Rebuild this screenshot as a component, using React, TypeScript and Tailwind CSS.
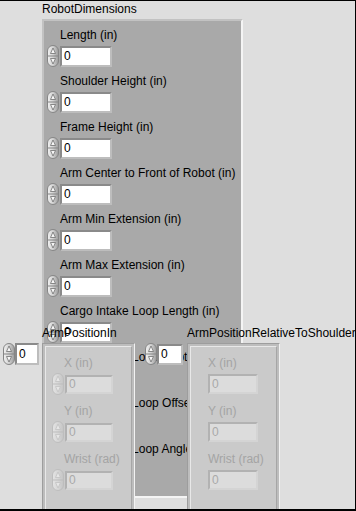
import React from 'react'

const font = { fontFamily: '"Liberation Sans", Arial, sans-serif' }

function Spinner({ disabled = false }: { disabled?: boolean }) {
  const edge = disabled ? '#bdbdbd' : '#858585'
  const arrow = disabled ? '#c2c2c2' : '#6e6e6e'
  const id = disabled ? 'spinD' : 'spinE'
  return (
    <svg width="12" height="22" viewBox="0 0 12 22" className="shrink-0">
      <defs>
        <linearGradient id={id} x1="0" y1="0" x2="1" y2="0">
          <stop offset="0" stopColor={disabled ? '#e4e4e4' : '#f2f2f2'} />
          <stop offset="0.5" stopColor={disabled ? '#d6d6d6' : '#d2d2d2'} />
          <stop offset="1" stopColor={disabled ? '#c4c4c4' : '#9a9a9a'} />
        </linearGradient>
      </defs>
      <rect x="0.5" y="0.5" width="11" height="21" rx="5.5" fill={`url(#${id})`} stroke={edge} />
      <line x1="1" y1="11" x2="11" y2="11" stroke={edge} strokeWidth="1" />
      <polygon points="6,3 3.5,8.5 8.5,8.5" fill={disabled ? '#e6e6e6' : '#f6f6f6'} stroke={arrow} strokeWidth="0.8" />
      <polygon points="6,19 3.5,13.5 8.5,13.5" fill={disabled ? '#e6e6e6' : '#f6f6f6'} stroke={arrow} strokeWidth="0.8" />
    </svg>
  )
}

function NumBox({ w, h = 21, disabled = false }: { w: number; h?: number; disabled?: boolean }) {
  return (
    <div
      className={
        disabled
          ? 'flex items-center border-2 border-t-[#b2b2b2] border-l-[#b2b2b2] border-b-[#d4d4d4] border-r-[#d4d4d4] bg-[#dcdcdc] pl-[2px] text-[12px] text-[#a9a9a9]'
          : 'flex items-center border-2 border-t-[#8a8a8a] border-l-[#8a8a8a] border-b-[#bdbdbd] border-r-[#bdbdbd] bg-white pl-[2px] text-[12px] text-black'
      }
      style={{ width: w, height: h }}
    >
      0
    </div>
  )
}

// the last three rows are mostly hidden behind the two position clusters
const robotFields = [
  'Length (in)',
  'Shoulder Height (in)',
  'Frame Height (in)',
  'Arm Center to Front of Robot (in)',
  'Arm Min Extension (in)',
  'Arm Max Extension (in)',
  'Cargo Intake Loop Length (in)',
  'Cargo Intake Loop Depth (in)',
  'Cargo Intake Loop Offset (in)',
  'Cargo Intake Loop Angle (rad)',
]

const posFields = ['X (in)', 'Y (in)', 'Wrist (rad)']

function PositionCluster({ control }: { control: boolean }) {
  return (
    <div className="h-[170px] w-[93px] border-t border-l border-[#9d9d9d] border-r-[#f2f2f2] border-b-[#f2f2f2] border-r border-b bg-[#bdbdbd] p-[2px]">
      <div
        className={
          'flex h-full flex-col gap-[8px] border border-t-[#e8e8e8] border-l-[#e8e8e8] border-b-[#a6a6a6] border-r-[#a6a6a6] bg-[#cacaca] pt-[8px] ' +
          (control ? 'pl-[6px]' : 'pl-[17px]')
        }
      >
        {posFields.map((f) => (
          <div key={f} className="flex flex-col">
            <div className={'h-[16px] whitespace-nowrap leading-[16px] text-[12px] text-[#a4a4a4] ' + (control ? 'pl-[12px]' : '')}>
              {f}
            </div>
            <div className="mt-[2px] flex h-[22px] items-center gap-[1px]">
              {control && <Spinner disabled />}
              <NumBox w={control ? 48 : 50} h={control ? 19 : 20} disabled />
            </div>
          </div>
        ))}
      </div>
    </div>
  )
}

export default function App() {
  return (
    <div
      className="relative h-[511px] w-[356px] overflow-hidden border-t border-r border-b-2 border-black bg-[#dedede] text-black"
      style={font}
    >
      {/* RobotDimensions cluster */}
      <div className="absolute left-[42px] top-[0px] h-[16px] whitespace-nowrap leading-[16px] text-[12px]">RobotDimensions</div>
      <div className="absolute left-[42px] top-[18px] h-[479px] w-[201px] overflow-hidden border-2 border-t-[#c2c2c2] border-l-[#c2c2c2] border-r-[#f4f4f4] border-b-[#f4f4f4] bg-[#a9a9a9] pl-[3px] pt-[6px]">
        <div className="flex flex-col gap-[6px]">
          {robotFields.map((f) => (
            <div key={f} className="flex flex-col">
              <div className="h-[16px] whitespace-nowrap pl-[13px] leading-[16px] text-[12px]">{f}</div>
              <div className="mt-[2px] flex h-[22px] items-center gap-[1px]">
                <Spinner />
                <NumBox w={52} />
              </div>
            </div>
          ))}
        </div>
      </div>

      {/* loose numeric controls */}
      <div className="absolute left-[3px] top-[342px] flex h-[22px] items-center gap-0">
        <Spinner />
        <NumBox w={24} h={22} />
      </div>
      <div className="absolute left-[145px] top-[342px] flex h-[22px] items-center gap-0">
        <Spinner />
        <NumBox w={26} h={21} />
      </div>

      {/* ArmPositionIn */}
      <div className="absolute left-[42px] top-[342px]">
        <PositionCluster control />
      </div>
      <div className="absolute left-[42px] top-[324px] h-[16px] whitespace-nowrap leading-[16px] text-[12px]">ArmPositionIn</div>

      {/* ArmPositionRelativeToShoulder */}
      <div className="absolute left-[187px] top-[342px]">
        <PositionCluster control={false} />
      </div>
      <div className="absolute left-[187px] top-[324px] h-[16px] whitespace-nowrap leading-[16px] text-[12px]">
        ArmPositionRelativeToShoulder
      </div>
    </div>
  )
}
